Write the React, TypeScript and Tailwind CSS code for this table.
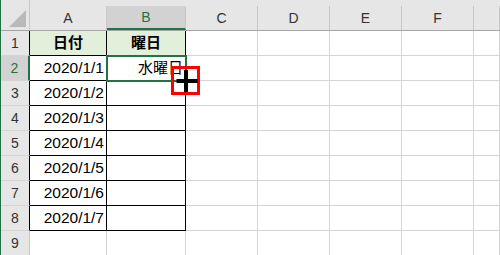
import React from 'react';

const columns = [
  { key: 'A', width: 'w-[77px]' },
  { key: 'B', width: 'w-[79px]' },
  { key: 'C', width: 'w-[72px]' },
  { key: 'D', width: 'w-[72px]' },
  { key: 'E', width: 'w-[72px]' },
  { key: 'F', width: 'w-[72px]' },
  { key: 'G', width: 'flex-1' },
];

// cell values keyed by "A1" style references
const values: Record<string, string> = {
  A1: '日付',
  B1: '曜日',
  A2: '2020/1/1',
  A3: '2020/1/2',
  A4: '2020/1/3',
  A5: '2020/1/4',
  A6: '2020/1/5',
  A7: '2020/1/6',
  A8: '2020/1/7',
  B2: '水曜日',
};

const rows = [1, 2, 3, 4, 5, 6, 7, 8, 9];
const activeCol = 'B';
const activeRow = 2;

const inTable = (col: string, row: number) => (col === 'A' || col === 'B') && row <= 8;

function ColumnHeader({ col }: { col: { key: string; width: string } }) {
  const active = col.key === activeCol;
  return (
    <div className={`${col.width} h-full flex items-end`}>
      <div
        className={`w-full h-[24px] flex items-center justify-center border-r border-[#c8c8c8] text-[14px] ${
          active ? 'bg-[#d2d2d2] text-[#217346] border-b-2 border-b-[#217346]' : 'text-[#333]'
        }`}
      >
        {col.key === 'G' ? '' : col.key}
      </div>
    </div>
  );
}

function Cell({ col, row }: { col: { key: string; width: string }; row: number }) {
  const ref = `${col.key}${row}`;
  const value = values[ref];
  const table = inTable(col.key, row);
  const heading = row === 1 && table;
  const isDate = col.key === 'A' && row > 1;
  return (
    <div
      className={`${col.width} h-full flex items-center border-r border-b px-[2px] text-black ${
        isDate ? 'text-[15.5px]' : 'text-[15px]'
      } ${table ? 'border-black' : 'border-[#d4d4d4]'} ${
        heading ? 'bg-[#e2efda] justify-center font-bold' : 'justify-end'
      }`}
    >
      {value}
    </div>
  );
}

export default function App() {
  return (
    <div
      className="relative w-[500px] h-[255px] overflow-hidden bg-white border-l border-[#217346]"
      style={{ fontFamily: '"Liberation Sans", "Noto Sans CJK JP", sans-serif' }}
    >
      {/* column header strip */}
      <div className="flex h-[31px] bg-[#e6e6e6] border-b border-[#a5a5a5]">
        <div className="w-[29px] h-full border-r border-[#c8c8c8] flex items-end justify-end pr-[2px] pb-[2px]">
          <svg width="18" height="18" viewBox="0 0 18 18">
            <polygon points="17,0 17,17 0,17" fill="#b9b9b9" />
          </svg>
        </div>
        {columns.map((col) => (
          <ColumnHeader key={col.key} col={col} />
        ))}
      </div>

      {rows.map((row) => (
        <div key={row} className="flex h-[25px]">
          <div
            className={`w-[29px] h-full flex items-center justify-center border-b border-[#d4d4d4] text-[14px] ${
              row === activeRow
                ? 'bg-[#d2d2d2] text-[#217346] border-r-2 border-r-[#217346]'
                : `bg-[#e6e6e6] text-[#333] border-r ${row <= 8 ? 'border-r-black' : 'border-r-[#c8c8c8]'}`
            }`}
          >
            {row}
          </div>
          {columns.map((col) => (
            <Cell key={col.key} col={col} row={row} />
          ))}
        </div>
      ))}

      {/* active cell outline */}
      <div className="absolute left-[105px] top-[55px] w-[81px] h-[27px] border-2 border-[#217346]" />

      {/* fill handle cursor */}
      <svg className="absolute left-[169px] top-[65px]" width="31" height="31" viewBox="0 0 31 31">
        <rect x="2.5" y="2.5" width="26" height="26" fill="none" stroke="#ff0000" strokeWidth="3" />
        <rect x="6.5" y="14" width="21" height="4" fill="#000" />
        <rect x="14" y="5" width="4" height="22" fill="#000" />
      </svg>
    </div>
  );
}
